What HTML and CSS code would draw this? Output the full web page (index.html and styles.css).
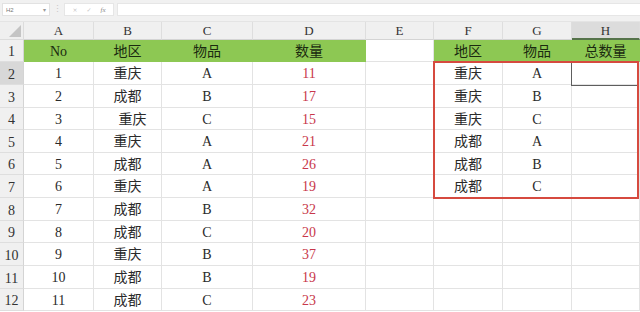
FILE: index.html
```html
<!DOCTYPE html>
<html lang="zh">
<head>
<meta charset="utf-8">
<link rel="stylesheet" href="styles.css">
</head>
<body>
<div class="app">
  <div class="toolbar">
    <div class="namebox"><span>H2</span><span class="caret">▾</span></div>
    <div class="sep">⋮</div>
    <div class="fxbox"><span>×</span><span>✓</span><span class="fx">fx</span></div>
    <div class="formula"></div>
  </div>
  <div class="sheet">
    <div class="corner"></div>
    <div class="ch">A</div><div class="ch">B</div><div class="ch">C</div><div class="ch">D</div><div class="ch">E</div><div class="ch">F</div><div class="ch">G</div><div class="ch sel">H</div>

    <div class="rh">1</div>
    <div class="c g">No</div><div class="c g">地区</div><div class="c g">物品</div><div class="c g">数量</div><div class="c"></div><div class="c g">地区</div><div class="c g">物品</div><div class="c g">总数量</div>

    <div class="rh sel">2</div>
    <div class="c">1</div><div class="c">重庆</div><div class="c">A</div><div class="c r">11</div><div class="c"></div><div class="c">重庆</div><div class="c">A</div><div class="c"></div>

    <div class="rh">3</div>
    <div class="c">2</div><div class="c">成都</div><div class="c">B</div><div class="c r">17</div><div class="c"></div><div class="c">重庆</div><div class="c">B</div><div class="c"></div>

    <div class="rh">4</div>
    <div class="c">3</div><div class="c shift">重庆</div><div class="c">C</div><div class="c r">15</div><div class="c"></div><div class="c">重庆</div><div class="c">C</div><div class="c"></div>

    <div class="rh">5</div>
    <div class="c">4</div><div class="c">重庆</div><div class="c">A</div><div class="c r">21</div><div class="c"></div><div class="c">成都</div><div class="c">A</div><div class="c"></div>

    <div class="rh">6</div>
    <div class="c">5</div><div class="c">成都</div><div class="c">A</div><div class="c r">26</div><div class="c"></div><div class="c">成都</div><div class="c">B</div><div class="c"></div>

    <div class="rh">7</div>
    <div class="c">6</div><div class="c">重庆</div><div class="c">A</div><div class="c r">19</div><div class="c"></div><div class="c">成都</div><div class="c">C</div><div class="c"></div>

    <div class="rh">8</div>
    <div class="c">7</div><div class="c">成都</div><div class="c">B</div><div class="c r">32</div><div class="c"></div><div class="c"></div><div class="c"></div><div class="c"></div>

    <div class="rh">9</div>
    <div class="c">8</div><div class="c">成都</div><div class="c">C</div><div class="c r">20</div><div class="c"></div><div class="c"></div><div class="c"></div><div class="c"></div>

    <div class="rh">10</div>
    <div class="c">9</div><div class="c">重庆</div><div class="c">B</div><div class="c r">37</div><div class="c"></div><div class="c"></div><div class="c"></div><div class="c"></div>

    <div class="rh">11</div>
    <div class="c">10</div><div class="c">成都</div><div class="c">B</div><div class="c r">19</div><div class="c"></div><div class="c"></div><div class="c"></div><div class="c"></div>

    <div class="rh">12</div>
    <div class="c">11</div><div class="c">成都</div><div class="c">C</div><div class="c r">23</div><div class="c"></div><div class="c"></div><div class="c"></div><div class="c"></div>

    <div class="active"></div>
    <div class="redbox"></div>
  </div>
</div>
</body>
</html>
```

FILE: styles.css
```css
* { box-sizing: border-box; }
html, body { margin: 0; padding: 0; }
body {
  width: 640px;
  height: 312px;
  overflow: hidden;
  background: #fff;
  font-family: "Liberation Serif", "Noto Sans CJK SC", serif;
}
.app { display: flex; flex-direction: column; }

.toolbar {
  height: 22px;
  background: #f1f1f1;
  display: flex;
  align-items: flex-start;
  padding-top: 3px;
  border-bottom: 1px solid #e4e4e4;
}
.namebox {
  margin-left: 2px;
  width: 48px;
  height: 13px;
  background: #fff;
  border: 1px solid #e2e2e2;
  display: flex;
  align-items: center;
  justify-content: space-between;
  padding: 0 3px 0 3px;
  font-family: "Liberation Sans", sans-serif;
  font-size: 6px;
  color: #777;
}
.namebox .caret { font-size: 6px; color: #999; }
.sep {
  width: 14px;
  text-align: center;
  font-size: 9px;
  line-height: 13px;
  color: #c8c8c8;
}
.fxbox {
  width: 50px;
  height: 13px;
  background: #fff;
  border: 1px solid #e6e6e6;
  display: flex;
  align-items: center;
  justify-content: space-around;
  padding: 0 3px;
  font-family: "DejaVu Sans", sans-serif;
  font-size: 6px;
  color: #c4c4c4;
}
.fxbox .fx { font-style: italic; color: #8a8a8a; font-family: "Liberation Serif", serif; font-size: 7px; }
.formula {
  flex: 1;
  margin-left: 3px;
  height: 13px;
  background: #fff;
  border: 1px solid #e6e6e6;
  border-right: none;
}

.sheet {
  position: relative;
  display: grid;
  grid-template-columns: 24px 70px 68px 91px 113px 68px 69px 69px 68px;
  grid-template-rows: 18px 22px 23px 23px 22px 23px 22px 23px 23px 22px 23px 23px 22px;
}
.corner {
  background: #efefef;
  border-right: 1px solid #dcdcdc;
  border-bottom: 1px solid #dcdcdc;
  position: relative;
}
.corner::after {
  content: "";
  position: absolute;
  right: 2px;
  bottom: 2px;
  width: 0;
  height: 0;
  border-left: 12px solid transparent;
  border-bottom: 12px solid #c4c4c4;
}
.ch {
  background: #f0f0f0;
  border-right: 1px solid #dedede;
  border-bottom: 1px solid #d4d4d4;
  display: flex;
  align-items: center;
  justify-content: center;
  font-size: 13px;
  line-height: 14px;
  color: #333;
  padding-top: 1px;
}
.ch.sel {
  background: #dcdcdc;
  border-bottom: 2px solid #55734a;
}
.rh {
  background: #f0f0f0;
  border-right: 1px solid #d4d4d4;
  border-bottom: 1px solid #dedede;
  display: flex;
  align-items: center;
  justify-content: center;
  font-size: 14px;
  line-height: 16px;
  color: #333;
  padding-top: 3px;
}
.rh.sel { background: #d8d8d8; }
.c {
  border-right: 1px solid #e3e3e3;
  border-bottom: 1px solid #e3e3e3;
  display: flex;
  align-items: center;
  justify-content: center;
  font-size: 14px;
  line-height: 16px;
  padding-top: 2px;
  color: #2a2a2a;
}
.c.g {
  background: #8dc853;
  border-color: #8dc853;
  color: #1b2a10;
}
.c.r { color: #c8374a; }
.c.shift { padding-left: 10px; }

.redbox {
  position: absolute;
  left: 433px;
  top: 39px;
  width: 206px;
  height: 138px;
  border: 2px solid #d64a3f;
  pointer-events: none;
}
.active {
  position: absolute;
  left: 571px;
  top: 40px;
  width: 66px;
  height: 24px;
  border: 1.5px solid #5e5e5e;
  border-right: none;
}
```
